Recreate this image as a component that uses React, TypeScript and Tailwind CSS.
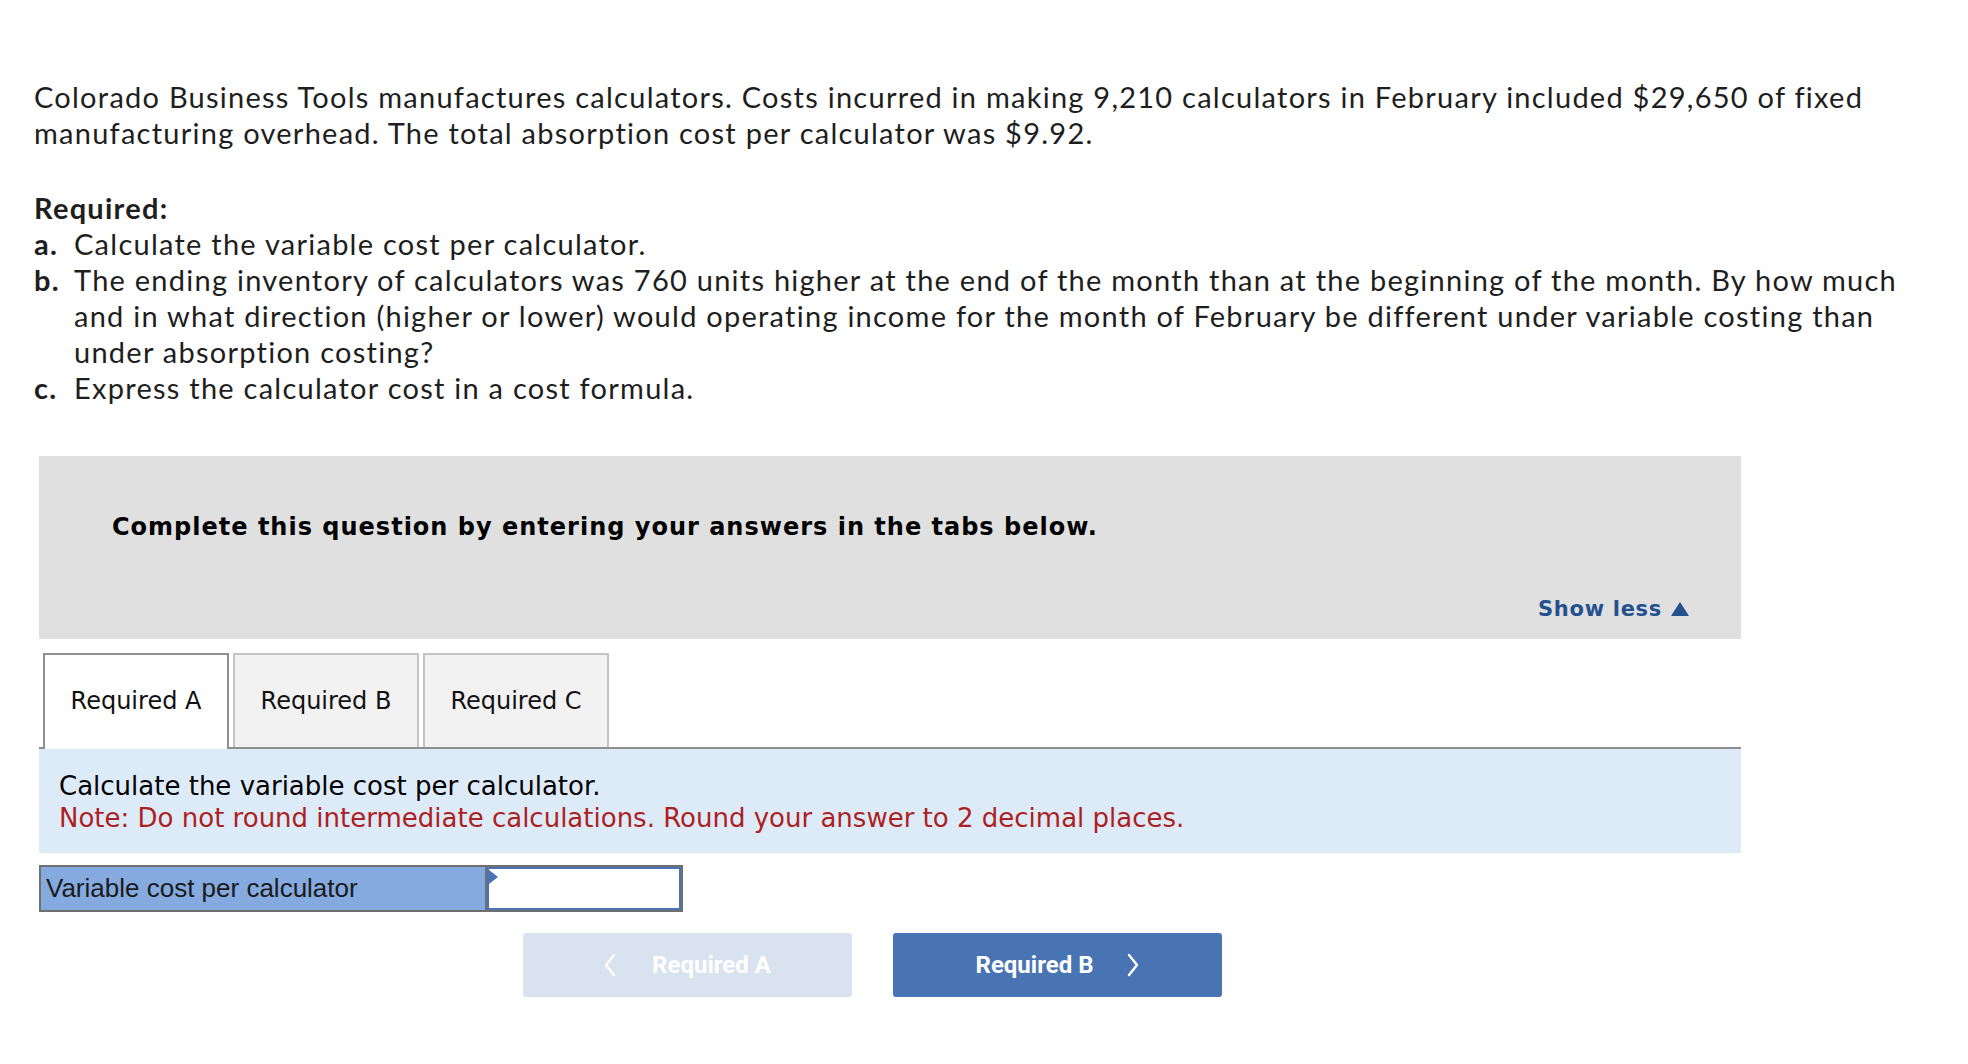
const proxima = { fontFamily: "Lato, 'Open Sans', sans-serif" };

function Chevron({ dir }: { dir: "left" | "right" }) {
  return (
    <svg width="12" height="24" viewBox="0 0 12 24" fill="none" className="shrink-0">
      {dir === "left" ? (
        <polyline points="10,2 2,12 10,22" stroke="white" strokeWidth="2.4" strokeLinejoin="round" strokeLinecap="round" />
      ) : (
        <polyline points="2,2 10,12 2,22" stroke="white" strokeWidth="2.4" strokeLinejoin="round" strokeLinecap="round" />
      )}
    </svg>
  );
}

const tabs = ["Required A", "Required B", "Required C"];

export default function App() {
  return (
    <div className="min-h-screen bg-white pl-[34px] pt-[79px] text-[#1e1e1e]">
      <p className="text-[29px] leading-[36px] tracking-[1.25px] whitespace-nowrap" style={proxima}>
        Colorado Business Tools manufactures calculators. Costs incurred in making 9,210 calculators in February included $29,650 of fixed
        <br />
        manufacturing overhead. The total absorption cost per calculator was $9.92.
      </p>

      <div className="mt-[39px] text-[29px] leading-[36px] tracking-[1.25px] whitespace-nowrap" style={proxima}>
        <div className="font-bold">Required:</div>
        <div className="flex">
          <span className="w-[40px] font-bold">a.</span>
          <span>Calculate the variable cost per calculator.</span>
        </div>
        <div className="flex">
          <span className="w-[40px] shrink-0 font-bold">b.</span>
          <span>
            The ending inventory of calculators was 760 units higher at the end of the month than at the beginning of the month. By how much
            <br />
            and in what direction (higher or lower) would operating income for the month of February be different under variable costing than
            <br />
            under absorption costing?
          </span>
        </div>
        <div className="flex">
          <span className="w-[40px] font-bold">c.</span>
          <span>Express the calculator cost in a cost formula.</span>
        </div>
      </div>

      <div className="mt-[50px] ml-[5px] w-[1702px] font-['DejaVu_Sans',Verdana,sans-serif]">
        <div className="flex h-[183px] flex-col bg-[#e0e0e0] pl-[73px] pr-[51px] pt-[57px] pb-[18px]">
          <div className="text-[24px] font-bold leading-[28px] tracking-[1px] text-black">
            Complete this question by entering your answers in the tabs below.
          </div>
          <button className="mt-auto flex items-center gap-[8px] self-end text-[21px] font-bold leading-[24px] tracking-[0.7px] text-[#24508f]">
            Show less
            <svg width="20" height="16" viewBox="0 0 20 16">
              <polygon points="10,1 19,15 1,15" fill="#24508f" />
            </svg>
          </button>
        </div>

        <div className="mt-[14px] flex h-[96px] items-end gap-[4px] border-b-2 border-[#8e8e8e] pl-[4px]">
          {tabs.map((t, i) =>
            i === 0 ? (
              <div
                key={t}
                className="relative -mb-[2px] flex h-[96px] w-[186px] items-center justify-center border-2 border-b-0 border-[#8e8e8e] bg-white pb-[2px] text-[24px] text-[#111]"
              >
                {t}
              </div>
            ) : (
              <div
                key={t}
                className="flex h-[94px] w-[186px] items-center justify-center border-2 border-b-0 border-[#c4c4c4] bg-[#f2f2f2] text-[24px] text-[#111]"
              >
                {t}
              </div>
            )
          )}
        </div>

        <div className="h-[104px] bg-[#ddeaf8] pl-[20px] pt-[21px] text-[26px] leading-[32px]">
          <div className="text-black">Calculate the variable cost per calculator.</div>
          <div className="text-[#ad1f1f]">Note: Do not round intermediate calculations. Round your answer to 2 decimal places.</div>
        </div>

        <div className="mt-[12px] flex h-[47px] w-[644px] border-2 border-[#6f6f6f]">
          <div className="flex w-[446px] items-center border-r-2 border-[#6f6f6f] bg-[#84aadf] pl-[5px] font-['Liberation_Sans',Arial,sans-serif] text-[26px] text-[#1a1a1a]">
            Variable cost per calculator
          </div>
          <div className="relative flex-1 border-2 border-[#4a73b5] bg-white">
            <svg className="absolute left-0 top-[1px]" width="10" height="15" viewBox="0 0 10 15">
              <polygon points="0,0 9,7 0,14" fill="#4a73b5" />
            </svg>
          </div>
        </div>

        <div className="mt-[21px] ml-[484px] flex gap-[41px] font-['Roboto',sans-serif] text-[24px] font-bold text-white">
          <button className="flex h-[64px] w-[329px] items-center justify-center gap-[36px] rounded-[3px] bg-[#d9e3ef]">
            <Chevron dir="left" />
            <span>Required A</span>
          </button>
          <button className="flex h-[64px] w-[329px] items-center justify-center gap-[34px] rounded-[3px] bg-[#4874b4]">
            <span>Required B</span>
            <Chevron dir="right" />
          </button>
        </div>
      </div>
    </div>
  );
}
